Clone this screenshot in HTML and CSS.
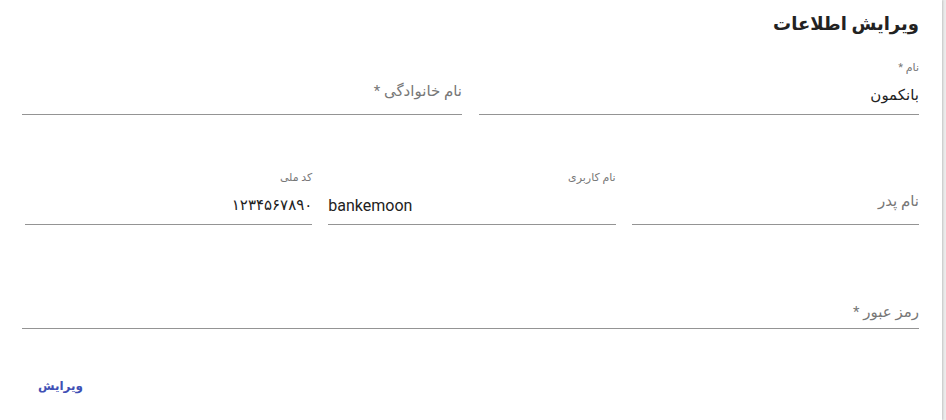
FILE: index.html
```html
<!DOCTYPE html>
<html lang="fa" dir="rtl">
<head>
<meta charset="utf-8">
<title>ویرایش اطلاعات</title>
<link rel="stylesheet" href="styles.css">
</head>
<body>
<div class="card">
  <h2 class="title">ویرایش اطلاعات</h2>

  <div class="row row-2">
    <div class="field">
      <span class="label">نام *</span>
      <span class="value">بانکمون</span>
    </div>
    <div class="field">
      <span class="placeholder">نام خانوادگی *</span>
    </div>
  </div>

  <div class="row row-3">
    <div class="field">
      <span class="placeholder">نام پدر</span>
    </div>
    <div class="field">
      <span class="label">نام کاربری</span>
      <span class="value value-ltr">bankemoon</span>
    </div>
    <div class="field">
      <span class="label">کد ملی</span>
      <span class="value">۱۲۳۴۵۶۷۸۹۰</span>
    </div>
  </div>

  <div class="row row-1">
    <div class="field">
      <span class="placeholder placeholder-low">رمز عبور *</span>
    </div>
  </div>

  <div class="actions">
    <button class="btn" type="button">ویرایش</button>
  </div>
</div>
</body>
</html>
```

FILE: styles.css
```css
html {
  background: #ececec;
}
body {
  margin: 0;
  font-family: Roboto, "DejaVu Sans", sans-serif;
  color: rgba(0, 0, 0, 0.87);
}
.card {
  width: 942px;
  height: 420px;
  margin-left: 0;
  margin-right: auto;
  background: #fff;
  box-shadow: 1px 0 2px rgba(0, 0, 0, 0.18);
  box-sizing: border-box;
  padding: 10px 23px 0 22px;
}
.title {
  margin: 0;
  font-size: 18px;
  line-height: 28px;
  font-weight: 700;
  color: #222;
}
.row {
  display: grid;
  column-gap: 17px;
}
.row-2 {
  grid-template-columns: 1fr 1fr;
  margin-top: 22px;
}
.row-3 {
  grid-template-columns: 1fr 1fr 1fr;
  column-gap: 16px;
  padding-left: 3px;
  margin-top: 55px;
}
.row-1 {
  grid-template-columns: 1fr;
  margin-top: 49px;
}
.field {
  height: 54px;
  border-bottom: 1px solid #949494;
  display: flex;
  flex-direction: column;
  justify-content: space-between;
}
.label {
  font-size: 11px;
  line-height: 16px;
  color: #777;
}
.value {
  font-size: 15px;
  line-height: 19px;
  padding-bottom: 9px;
  color: #222;
}
.value-ltr {
  direction: ltr;
  text-align: left;
  font-size: 16px;
}
.placeholder {
  margin-top: auto;
  font-size: 15px;
  line-height: 19px;
  padding-bottom: 13px;
  color: #777;
}
.placeholder-low {
  padding-bottom: 6px;
}
.actions {
  margin-top: 39px;
  display: flex;
  justify-content: flex-end;
  padding-left: 8px;
}
.btn {
  height: 36px;
  padding: 0 8px;
  border: 0;
  background: none;
  font-family: Roboto, "DejaVu Sans", sans-serif;
  font-size: 12px;
  font-weight: 700;
  color: #3f51b5;
  cursor: pointer;
}
```
